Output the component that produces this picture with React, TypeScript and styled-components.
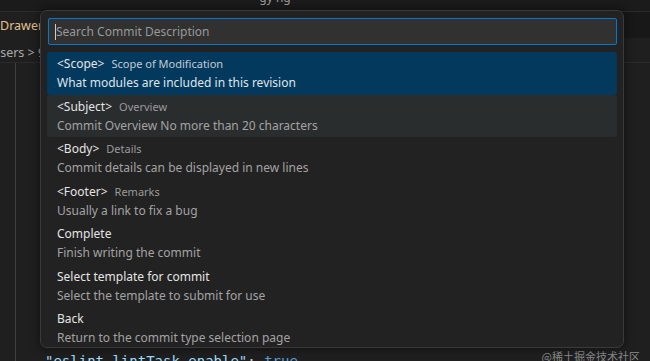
import styled, { createGlobalStyle } from 'styled-components';

interface IPick {
  label: string;
  description?: string;
  detail: string;
}

const picks: IPick[] = [
  { label: '<Scope>', description: 'Scope of Modification', detail: 'What modules are included in this revision' },
  { label: '<Subject>', description: 'Overview', detail: 'Commit Overview No more than 20 characters' },
  { label: '<Body>', description: 'Details', detail: 'Commit details can be displayed in new lines' },
  { label: '<Footer>', description: 'Remarks', detail: 'Usually a link to fix a bug' },
  { label: 'Complete', detail: 'Finish writing the commit' },
  { label: 'Select template for commit', detail: 'Select the template to submit for use' },
  { label: 'Back', detail: 'Return to the commit type selection page' },
];

const GlobalStyle = createGlobalStyle`
  html, body {
    margin: 0;
    padding: 0;
    background: #1f1f1f;
    overflow: hidden;
  }
`;

function App() {
  return (
    <>
      <GlobalStyle />
      <Window>
        <TitleBar>
          <TitleText>gy ng</TitleText>
        </TitleBar>
        <TabBar>
          <Tab>Drawer.tsx</Tab>
        </TabBar>
        <Breadcrumb>
          <Crumb>Users &gt; 9</Crumb>
        </Breadcrumb>
        <Editor>
          <IndentGuide />
          <CodeLine>
            <Str>"eslint.lintTask.enable"</Str>
            <Punct>: </Punct>
            <Keyword>true</Keyword>
          </CodeLine>
        </Editor>
        <Watermark>@稀土掘金技术社区</Watermark>

        <QuickPick>
          <SearchBox>
            <Caret />
            <Placeholder>Search Commit Description</Placeholder>
          </SearchBox>
          <List>
            {picks.map((pick, i) => (
              <Row key={pick.label} state={i === 0 ? 'selected' : i === 1 ? 'hover' : 'none'}>
                <LabelLine>
                  <Label>{pick.label}</Label>
                  {pick.description && <Description selected={i === 0}>{pick.description}</Description>}
                </LabelLine>
                <Detail selected={i === 0}>{pick.detail}</Detail>
              </Row>
            ))}
          </List>
        </QuickPick>
      </Window>
    </>
  );
}

const font = `'Noto Sans', 'Noto Sans CJK SC', sans-serif`;

const Window = styled.div`
  position: relative;
  width: 650px;
  height: 361px;
  overflow: hidden;
  display: flex;
  flex-direction: column;
  background: #1f1f1f;
  font-family: ${font};
`;

const TitleBar = styled.div`
  height: 11px;
  flex-shrink: 0;
  background: #1b1b1b;
  display: flex;
  justify-content: center;
  overflow: hidden;
  border-bottom: 1px solid #2b2b2b;
`;

const TitleText = styled.span`
  font-size: 12px;
  line-height: 12px;
  margin-top: -8px;
  margin-left: -100px;
  color: #9d9d9d;
`;

const TabBar = styled.div`
  height: 26px;
  flex-shrink: 0;
  background: #181818;
  display: flex;
`;

const Tab = styled.div`
  height: 100%;
  display: flex;
  align-items: center;
  background: #1f1f1f;
  color: #e2c08d;
  font-size: 12.5px;
  border-right: 1px solid #2b2b2b;
`;

const Breadcrumb = styled.div`
  height: 25px;
  flex-shrink: 0;
  box-sizing: border-box;
  display: flex;
  align-items: center;
  padding-top: 4px;
  border-bottom: 1px solid #2b2b2b;
  overflow: hidden;
`;

const Crumb = styled.span`
  margin-left: -9px;
  color: #a9a9a9;
  font-size: 12.5px;
`;

const Editor = styled.div`
  position: relative;
  flex: 1;
  display: flex;
  flex-direction: column;
  justify-content: flex-end;
  padding-left: 45px;
`;

const IndentGuide = styled.div`
  position: absolute;
  left: 15px;
  top: 0;
  bottom: 0;
  width: 1px;
  background: #404040;
`;

const CodeLine = styled.div`
  font-family: 'DejaVu Sans Mono', monospace;
  font-size: 14px;
  line-height: 19px;
  margin-bottom: -10px;
  white-space: pre;
`;

const Str = styled.span`
  color: #9cdcfe;
`;

const Punct = styled.span`
  color: #cccccc;
`;

const Keyword = styled.span`
  color: #569cd6;
`;

const Watermark = styled.div`
  position: absolute;
  right: 10px;
  bottom: -3px;
  font-size: 11px;
  color: #8a8a8a;
  font-family: 'Noto Sans CJK SC', sans-serif;
`;

const QuickPick = styled.div`
  position: absolute;
  left: 40px;
  top: 10px;
  width: 584px;
  height: 338px;
  box-sizing: border-box;
  padding: 7px 6px 0 6px;
  background: #222222;
  border: 1px solid #3a3a3a;
  border-radius: 7px;
  box-shadow: 0 0 8px 2px rgba(0, 0, 0, 0.36);
  overflow: hidden;
  display: flex;
  flex-direction: column;
  gap: 7px;
`;

const SearchBox = styled.div`
  height: 27px;
  flex-shrink: 0;
  box-sizing: border-box;
  margin-left: 1px;
  border: 1px solid #0078d4;
  border-radius: 2px;
  background: #313131;
  display: flex;
  align-items: center;
  padding-left: 6px;
`;

const Caret = styled.span`
  width: 1px;
  height: 16px;
  background: #cccccc;
`;

const Placeholder = styled.span`
  font-size: 12px;
  color: #989898;
`;

const List = styled.div`
  display: flex;
  flex-direction: column;
`;

const rowBg = {
  selected: '#04395e',
  hover: '#2a2d2e',
  none: 'transparent',
};

const Row = styled.div<{ state: 'selected' | 'hover' | 'none' }>`
  height: 42.5px;
  flex-shrink: 0;
  box-sizing: border-box;
  padding: 2px 0 0 10px;
  border-radius: 3px;
  background: ${(props) => rowBg[props.state]};
`;

const LabelLine = styled.div`
  display: flex;
  align-items: baseline;
  gap: 7px;
  height: 19px;
  line-height: 19px;
`;

const Label = styled.span`
  font-size: 12px;
  color: #e4e4e4;
`;

const Description = styled.span<{ selected?: boolean }>`
  font-size: 11px;
  color: ${(props) => (props.selected ? '#c2cbd3' : '#9a9a9a')};
`;

const Detail = styled.div<{ selected?: boolean }>`
  height: 19px;
  line-height: 19px;
  font-size: 12px;
  color: ${(props) => (props.selected ? '#dfe5ea' : '#a3a3a3')};
`;

export default App;
